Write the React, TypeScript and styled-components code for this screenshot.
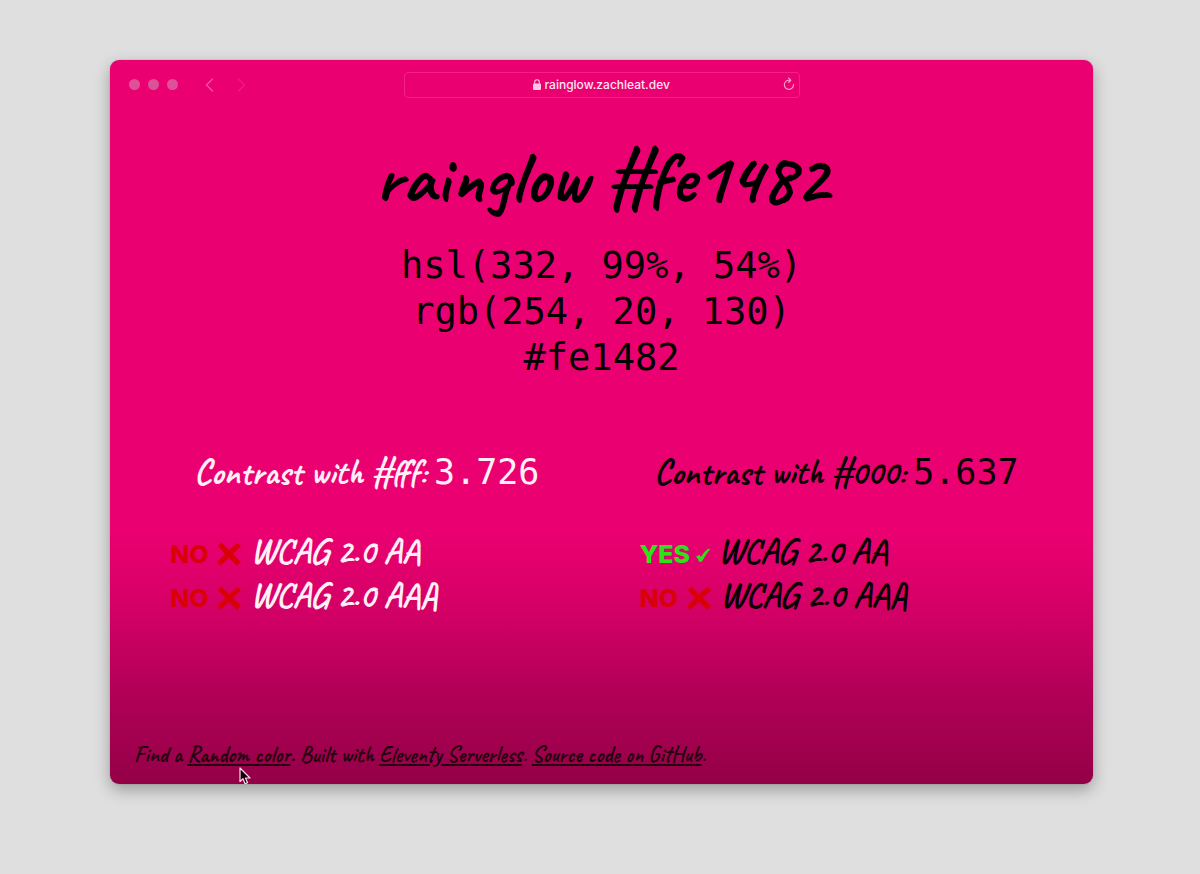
import React from "react";
import styled, { createGlobalStyle } from "styled-components";

const brush = `Caveat, "Caveat Brush", Lato, sans-serif`;
const mono = `Menlo, "DejaVu Sans Mono", monospace`;
const system = `Inter, "Liberation Sans", sans-serif`;

const GlobalStyle = createGlobalStyle`
  * { box-sizing: border-box; }
  body { margin: 0; background: #dfdfdf; }
  h1, h2, p, ul { margin: 0; padding: 0; }
`;

const Desktop = styled.div`
  min-height: 100vh;
  display: flex;
  padding: 60px 107px 90px 110px;
`;

const BrowserWindow = styled.div`
  position: relative;
  flex: 1;
  display: flex;
  flex-direction: column;
  border-radius: 9px;
  color: #000;
  background: linear-gradient(#eb0071 0%, #eb0071 65%, #dd006a 72%, #cb0062 79%, #b00056 88%, #a30050 94%, #930046 100%);
  box-shadow: 0 0 1px rgba(0, 0, 0, 0.5), 0 6px 16px rgba(0, 0, 0, 0.3);
`;

const Toolbar = styled.header`
  display: grid;
  grid-template-columns: 1fr 396px 1fr;
  align-items: center;
  height: 49px;
  padding: 0 19px;
`;

const Controls = styled.div`
  display: flex;
  align-items: center;
`;

const Dots = styled.div`
  display: flex;
  gap: 8px;
  margin-right: 15px;
`;

const Dot = styled.span`
  width: 11px;
  height: 11px;
  border-radius: 50%;
  background: #dd5199;
`;

const IconButton = styled.button<{ $dim?: boolean }>`
  display: flex;
  align-items: center;
  justify-content: center;
  width: 32px;
  height: 24px;
  padding: 0;
  border: 0;
  background: none;
  color: ${(p) => (p.$dim ? "#f01c86" : "#f651a4")};
`;

const AddressBar = styled.div`
  display: grid;
  grid-template-columns: 1fr auto 1fr;
  align-items: center;
  height: 26px;
  border: 1px solid #f5208a;
  border-radius: 4px;
`;

const Address = styled.label`
  grid-column: 2;
  display: flex;
  align-items: center;
  gap: 4px;
  color: #ffc6e4;
`;

const AddressInput = styled.input`
  width: 126px;
  padding: 0;
  border: 0;
  outline: 0;
  background: none;
  color: #ffe6f3;
  font: 500 12px/16px ${system};
`;

const Reload = styled.button`
  justify-self: end;
  display: flex;
  padding: 0 0 2px;
  margin-right: 4px;
  border: 0;
  background: none;
  color: #ffa0d2;
`;

const Page = styled.main`
  flex: 1;
  display: flex;
  flex-direction: column;
  padding: 29px 24px 16px;
`;

const Title = styled.h1`
  font: 700 74px/80px ${brush};
  text-align: center;
`;

const Values = styled.div`
  margin-top: 25px;
  font: 37px/46px ${mono};
  text-align: center;
`;

const Columns = styled.div`
  display: grid;
  grid-template-columns: 1fr 1fr;
  column-gap: 4px;
  margin-top: 67px;
`;

const Column = styled.section<{ $light?: boolean }>`
  color: ${(p) => (p.$light ? "#fff0f8" : "#0a0004")};
`;

const Contrast = styled.h2`
  display: flex;
  justify-content: center;
  align-items: baseline;
  gap: 8px;
  font: 700 35px/48px ${brush};
`;

const Ratio = styled.span`
  font: 35px/48px ${mono};
`;

const Results = styled.ul`
  list-style: none;
  margin-top: 33px;
  padding-left: 36px;
`;

const Result = styled.li`
  display: flex;
  align-items: baseline;
  gap: 8px;
  height: 44px;
  font: 700 35px/44px ${brush};
`;

const Verdict = styled.span<{ $pass?: boolean }>`
  display: flex;
  align-items: center;
  gap: ${(p) => (p.$pass ? "6px" : "8px")};
  color: ${(p) => (p.$pass ? "#2fe01a" : "#d90008")};
  font: 800 25px/44px ${system};
`;

const Footer = styled.footer`
  margin-top: auto;
  color: #26000f;
  font: 700 22px/26px ${brush};
`;

const Link = styled.a`
  color: inherit;
`;

const Cursor = styled.svg`
  position: absolute;
  left: 129px;
  bottom: -1px;
`;

const Cross = () => (
  <svg width="26" height="26" viewBox="0 0 26 26" aria-hidden="true">
    <path d="M2 5 5 1 13 9 21 2 25 5 17 13 25 21 21 25 13 17 4 25 1 21 9 13Z" fill="currentColor" />
  </svg>
);

const Check = () => (
  <svg width="14" height="18" viewBox="0 0 14 18" aria-hidden="true">
    <path d="M0 11.500 3.300 10Q4.300 10.600 4.800 12 8 6.500 12.500 3.500L14 4.200Q9.800 9.500 5.800 16.800L3 16.800Q2.100 13.500 0 11.500Z" fill="currentColor" />
  </svg>
);

const levels = (aa: boolean, aaa: boolean) => [
  { name: "WCAG 2.0 AA", pass: aa },
  { name: "WCAG 2.0 AAA", pass: aaa },
];

const contrasts = [
  { against: "#fff", ratio: "3.726", light: true, results: levels(false, false) },
  { against: "#000", ratio: "5.637", light: false, results: levels(true, false) },
];

export default function App() {
  return (
    <Desktop>
      <GlobalStyle />
      <BrowserWindow>
        <Toolbar>
          <Controls>
            <Dots>
              <Dot />
              <Dot />
              <Dot />
            </Dots>
            <IconButton aria-label="Back">
              <svg width="9" height="14" viewBox="0 0 9 14" fill="none" stroke="currentColor" strokeWidth="1.4" strokeLinecap="round">
                <path d="M7.500 1 1.500 7l6 6" />
              </svg>
            </IconButton>
            <IconButton $dim aria-label="Forward">
              <svg width="9" height="14" viewBox="0 0 9 14" fill="none" stroke="currentColor" strokeWidth="1.2" strokeLinecap="round">
                <path d="m1.500 1 6 6-6 6" />
              </svg>
            </IconButton>
          </Controls>
          <AddressBar>
            <Address>
              <svg width="8" height="11" viewBox="0 0 8 11" aria-hidden="true">
                <rect y="4.500" width="8" height="6.500" rx="1" fill="currentColor" />
                <path d="M1.700 5V3a2.300 2.300 0 0 1 4.600 0v2" fill="none" stroke="currentColor" strokeWidth="1.100" />
              </svg>
              <AddressInput aria-label="Address" defaultValue="rainglow.zachleat.dev" />
            </Address>
            <Reload aria-label="Reload">
              <svg width="12" height="14" viewBox="0 0 12 14" fill="none" stroke="currentColor" strokeWidth="1.100" strokeLinecap="round">
                <path d="M10.500 7.500A4.600 4.600 0 1 1 6 3.200h1.500M5.500 1l2.300 2.200L5.600 5.500" />
              </svg>
            </Reload>
          </AddressBar>
        </Toolbar>
        <Page>
          <Title>rainglow #fe1482</Title>
          <Values>
            <p>hsl(332, 99%, 54%)</p>
            <p>rgb(254, 20, 130)</p>
            <p>#fe1482</p>
          </Values>
          <Columns>
            {contrasts.map((c) => (
              <Column key={c.against} $light={c.light}>
                <Contrast>
                  Contrast with {c.against}: <Ratio>{c.ratio}</Ratio>
                </Contrast>
                <Results>
                  {c.results.map((r) => (
                    <Result key={r.name}>
                      <Verdict $pass={r.pass}>
                        {r.pass ? "YES" : "NO"}
                        {r.pass ? <Check /> : <Cross />}
                      </Verdict>
                      {r.name}
                    </Result>
                  ))}
                </Results>
              </Column>
            ))}
          </Columns>
          <Footer>
            Find a <Link href="#random">Random color</Link>. Built with <Link href="#eleventy">Eleventy Serverless</Link>.{" "}
            <Link href="#source">Source code on GitHub</Link>.
          </Footer>
        </Page>
        <Cursor width="12" height="18" viewBox="0 0 12 18" aria-hidden="true">
          <path d="M1 1v13.500l3-2.800 2 5 2.500-1-2-4.700H11Z" fill="#16000a" stroke="#ffd9ee" strokeWidth="1.200" strokeLinejoin="round" />
        </Cursor>
      </BrowserWindow>
    </Desktop>
  );
}
